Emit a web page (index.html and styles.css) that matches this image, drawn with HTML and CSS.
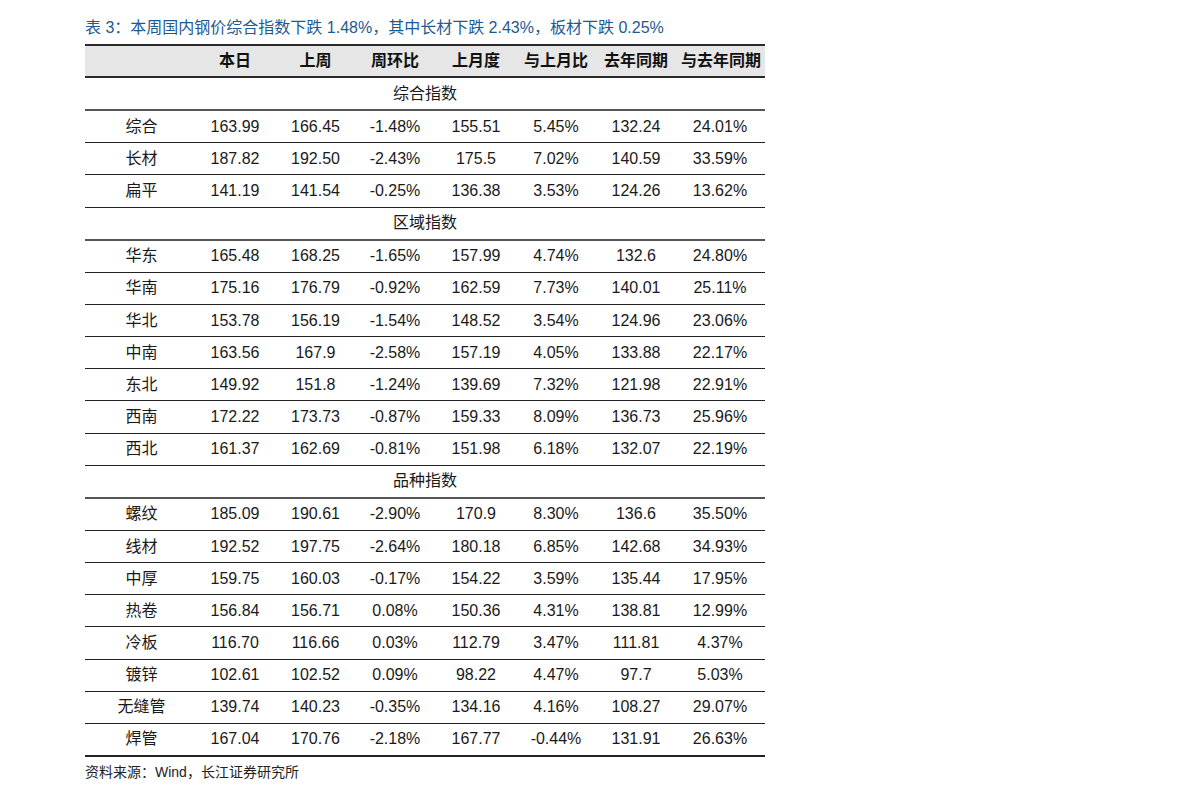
FILE: index.html
```html
<!DOCTYPE html>
<html lang="zh">
<head>
<meta charset="utf-8">
<title>表 3</title>
<link rel="stylesheet" href="styles.css">
</head>
<body>
<div class="page">
  <div class="title">表 3：本周国内钢价综合指数下跌 1.48%，其中长材下跌 2.43%，板材下跌 0.25%</div>
  <table class="data">
    <colgroup>
      <col class="c1"><col class="c2"><col class="c3"><col class="c4"><col class="c5"><col class="c6"><col class="c7"><col class="c8">
    </colgroup>
    <thead>
      <tr><th></th><th>本日</th><th>上周</th><th>周环比</th><th>上月度</th><th>与上月比</th><th>去年同期</th><th class="last">与去年同期</th></tr>
    </thead>
    <tbody>
      <tr class="sec"><td colspan="8">综合指数</td></tr>
      <tr><td>综合</td><td>163.99</td><td>166.45</td><td>-1.48%</td><td>155.51</td><td>5.45%</td><td>132.24</td><td class="last">24.01%</td></tr>
      <tr><td>长材</td><td>187.82</td><td>192.50</td><td>-2.43%</td><td>175.5</td><td>7.02%</td><td>140.59</td><td class="last">33.59%</td></tr>
      <tr><td>扁平</td><td>141.19</td><td>141.54</td><td>-0.25%</td><td>136.38</td><td>3.53%</td><td>124.26</td><td class="last">13.62%</td></tr>
      <tr class="sec"><td colspan="8">区域指数</td></tr>
      <tr><td>华东</td><td>165.48</td><td>168.25</td><td>-1.65%</td><td>157.99</td><td>4.74%</td><td>132.6</td><td class="last">24.80%</td></tr>
      <tr><td>华南</td><td>175.16</td><td>176.79</td><td>-0.92%</td><td>162.59</td><td>7.73%</td><td>140.01</td><td class="last">25.11%</td></tr>
      <tr><td>华北</td><td>153.78</td><td>156.19</td><td>-1.54%</td><td>148.52</td><td>3.54%</td><td>124.96</td><td class="last">23.06%</td></tr>
      <tr><td>中南</td><td>163.56</td><td>167.9</td><td>-2.58%</td><td>157.19</td><td>4.05%</td><td>133.88</td><td class="last">22.17%</td></tr>
      <tr><td>东北</td><td>149.92</td><td>151.8</td><td>-1.24%</td><td>139.69</td><td>7.32%</td><td>121.98</td><td class="last">22.91%</td></tr>
      <tr><td>西南</td><td>172.22</td><td>173.73</td><td>-0.87%</td><td>159.33</td><td>8.09%</td><td>136.73</td><td class="last">25.96%</td></tr>
      <tr><td>西北</td><td>161.37</td><td>162.69</td><td>-0.81%</td><td>151.98</td><td>6.18%</td><td>132.07</td><td class="last">22.19%</td></tr>
      <tr class="sec"><td colspan="8">品种指数</td></tr>
      <tr><td>螺纹</td><td>185.09</td><td>190.61</td><td>-2.90%</td><td>170.9</td><td>8.30%</td><td>136.6</td><td class="last">35.50%</td></tr>
      <tr><td>线材</td><td>192.52</td><td>197.75</td><td>-2.64%</td><td>180.18</td><td>6.85%</td><td>142.68</td><td class="last">34.93%</td></tr>
      <tr><td>中厚</td><td>159.75</td><td>160.03</td><td>-0.17%</td><td>154.22</td><td>3.59%</td><td>135.44</td><td class="last">17.95%</td></tr>
      <tr><td>热卷</td><td>156.84</td><td>156.71</td><td>0.08%</td><td>150.36</td><td>4.31%</td><td>138.81</td><td class="last">12.99%</td></tr>
      <tr><td>冷板</td><td>116.70</td><td>116.66</td><td>0.03%</td><td>112.79</td><td>3.47%</td><td>111.81</td><td class="last">4.37%</td></tr>
      <tr><td>镀锌</td><td>102.61</td><td>102.52</td><td>0.09%</td><td>98.22</td><td>4.47%</td><td>97.7</td><td class="last">5.03%</td></tr>
      <tr><td>无缝管</td><td>139.74</td><td>140.23</td><td>-0.35%</td><td>134.16</td><td>4.16%</td><td>108.27</td><td class="last">29.07%</td></tr>
      <tr class="end"><td>焊管</td><td>167.04</td><td>170.76</td><td>-2.18%</td><td>167.77</td><td>-0.44%</td><td>131.91</td><td class="last">26.63%</td></tr>
    </tbody>
  </table>
  <div class="source">资料来源：Wind，长江证券研究所</div>
</div>
</body>
</html>
```

FILE: styles.css
```css
html, body {
  margin: 0;
  padding: 0;
  background: #ffffff;
}

body {
  font-family: "Liberation Sans", Arial, "Noto Sans CJK SC", sans-serif;
  color: #1a1a1a;
}

.page {
  padding: 18px 0 0 85px;
  width: 680px;
}

.title {
  font-size: 16px;
  line-height: 20px;
  color: #1d5a92;
  white-space: nowrap;
  margin-bottom: 6px;
}

.data {
  width: 680px;
  border-collapse: collapse;
  table-layout: fixed;
  font-size: 16px;
}

.c1 { width: 113px; }
.c2 { width: 74px; }
.c3 { width: 87px; }
.c4 { width: 72px; }
.c5 { width: 90px; }
.c6 { width: 70px; }
.c7 { width: 90px; }
.c8 { width: 84px; }

.data th,
.data td {
  height: 31.15px;
  padding: 0;
  text-align: center;
  white-space: nowrap;
  vertical-align: middle;
  line-height: 20px;
}

.data thead th {
  background: #e6e6e6;
  font-weight: bold;
  color: #111;
  border-top: 2px solid #2a2a2a;
  border-bottom: 2px solid #2a2a2a;
  height: 30px;
}

.data tbody td {
  border-bottom: 1px solid #222;
  color: #1a1a1a;
}

.data tbody tr.sec td {
  border-bottom: 2px solid #555;
}

.data tbody tr.end td {
  border-bottom: 2px solid #222;
}

.data .last {
  padding-right: 6px;
}

.source {
  margin-top: 6px;
  font-size: 14px;
  line-height: 18px;
  color: #222;
}
```
